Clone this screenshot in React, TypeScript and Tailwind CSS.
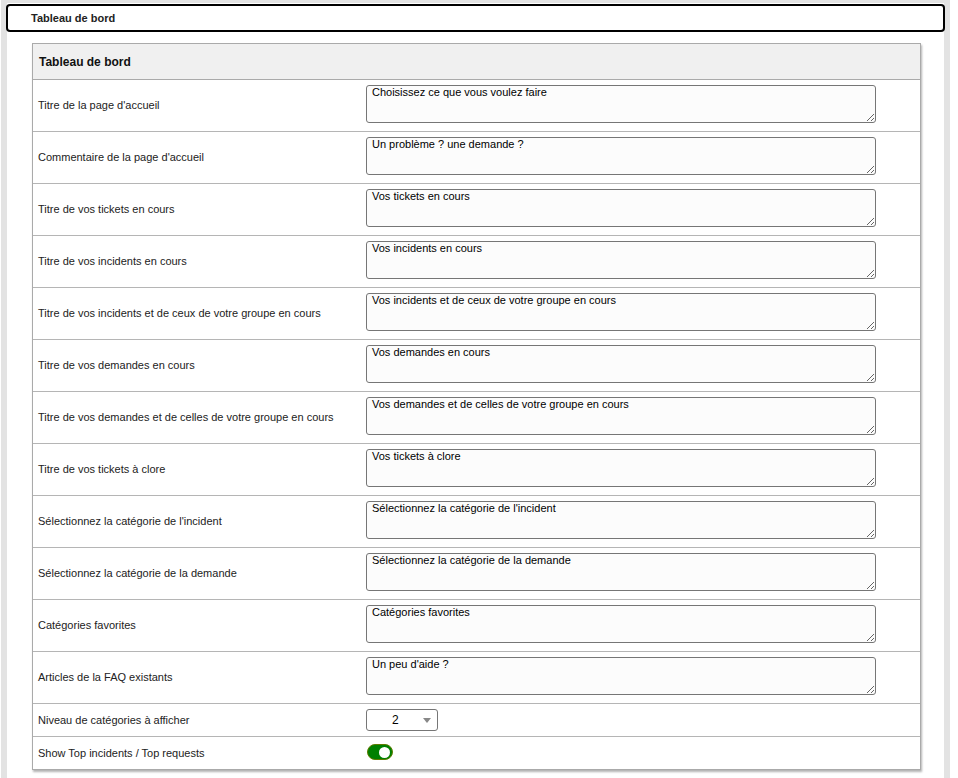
import React from "react";

const rows: [string, string][] = [
  ["Titre de la page d'accueil", "Choisissez ce que vous voulez faire"],
  ["Commentaire de la page d'accueil", "Un problème ? une demande ?"],
  ["Titre de vos tickets en cours", "Vos tickets en cours"],
  ["Titre de vos incidents en cours", "Vos incidents en cours"],
  ["Titre de vos incidents et de ceux de votre groupe en cours", "Vos incidents et de ceux de votre groupe en cours"],
  ["Titre de vos demandes en cours", "Vos demandes en cours"],
  ["Titre de vos demandes et de celles de votre groupe en cours", "Vos demandes et de celles de votre groupe en cours"],
  ["Titre de vos tickets à clore", "Vos tickets à clore"],
  ["Sélectionnez la catégorie de l'incident", "Sélectionnez la catégorie de l'incident"],
  ["Sélectionnez la catégorie de la demande", "Sélectionnez la catégorie de la demande"],
  ["Catégories favorites", "Catégories favorites"],
  ["Articles de la FAQ existants", "Un peu d'aide ?"],
];

export default function App() {
  return (
    <div className="min-h-[778px] bg-white font-['Liberation_Sans',Arial,sans-serif] text-[#222]">
      <div className="ml-[1px] w-[949px] min-h-[778px] border-x-[6px] border-t-[3px] border-[#e3e3e3] bg-white pt-[1px] pb-[20px]">
        <div className="-mx-[1px] h-[28px] rounded-[4px] border-2 border-black flex items-center pl-[23px] text-[11px] font-bold">
          Tableau de bord
        </div>
        <div className="ml-[25px] mt-[11px] w-[889px] border border-[#aaa] bg-white shadow-[1px_2px_2px_rgba(0,0,0,0.3)]">
          <div className="h-[36px] bg-[#f0f0f0] border-b border-[#aaa] flex items-center pl-[6px] text-[12px] font-bold text-[#111]">
            Tableau de bord
          </div>
          {rows.map(([label, value], i) => (
            <div key={i} className="flex h-[52px] border-b border-[#b5b5b5]">
              <div className="w-[333px] shrink-0 pl-[5px] flex items-center text-[11px]">{label}</div>
              <div className="pt-[5px]">
                <textarea
                  readOnly
                  defaultValue={value}
                  className="block w-[510px] h-[38px] rounded-[3px] border border-[#767676] bg-[#fcfcfc] px-[5px] py-0 text-[11px] leading-[13px] text-black outline-none font-['Liberation_Sans',Arial,sans-serif]"
                />
              </div>
            </div>
          ))}
          <div className="flex h-[33px] border-b border-[#b5b5b5]">
            <div className="w-[333px] shrink-0 pl-[5px] flex items-center text-[11px]">Niveau de catégories à afficher</div>
            <div className="pt-[5px]">
              <div className="relative w-[72px] h-[22px] rounded-[3px] border border-[#767676] bg-white flex items-center text-[12px] text-black">
                <span className="absolute left-[25px]">2</span>
                <svg className="absolute left-[56px] top-[8px]" width="8" height="5" viewBox="0 0 8 5">
                  <polygon points="0,0 8,0 4,5" fill="#888" />
                </svg>
              </div>
            </div>
          </div>
          <div className="flex h-[32px]">
            <div className="w-[333px] shrink-0 pl-[5px] flex items-center text-[11px]">Show Top incidents / Top requests</div>
            <div className="pt-[7px]">
              <div className="ml-[1px] w-[26px] h-[16px] rounded-full bg-[#008000] border border-[#5e7d00] flex items-center justify-end pr-[2px]">
                <div className="w-[11px] h-[11px] rounded-full bg-white" />
              </div>
            </div>
          </div>
        </div>
      </div>
    </div>
  );
}
